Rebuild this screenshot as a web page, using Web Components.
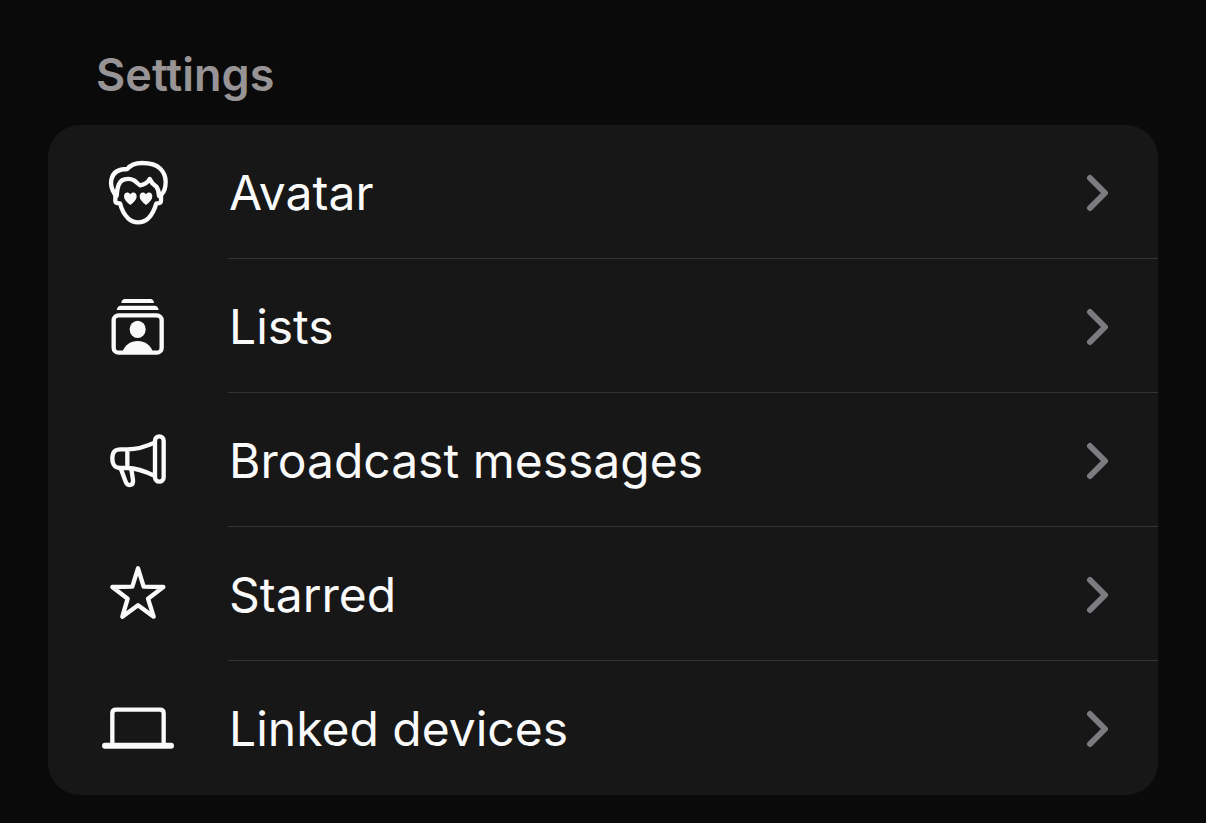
<!DOCTYPE html>
<html lang="en">
<head>
<meta charset="utf-8">
<meta name="viewport" content="width=device-width, initial-scale=1">
<title>Settings</title>
<style>
  html { background: #0a0a0a; }
  body { margin: 0; font-family: Inter, "Liberation Sans", sans-serif; color: #fafafa; }
</style>
</head>
<body>
<settings-section heading="Settings">
  <settings-row icon="avatar">Avatar</settings-row>
  <settings-row icon="lists">Lists</settings-row>
  <settings-row icon="megaphone">Broadcast messages</settings-row>
  <settings-row icon="star">Starred</settings-row>
  <settings-row icon="laptop">Linked devices</settings-row>
</settings-section>
<script>
const ICONS = {
  avatar: `<svg viewBox="36 18 216 216" fill="none" stroke="currentColor" stroke-width="13" stroke-linejoin="round" stroke-linecap="round">
    <path d="M74 132C65 118 61 104 64 89C68 69 85 57 112 57C122 44 138 39 156 39C176 39 198 43 211 56C221 66 227 79 227 95C227 112 223 125 215 133"/>
    <path d="M80 138C81 118 84 94 101 89C113 85 123 86 132 91C138 95 143 101 150 106C162 104 173 98 179 87C184 98 190 104 199 110C205 118 207 128 207 138"/>
    <path d="M76 132V153C76 158 80 160 90 160C94 176 103 194 114 205C123 213 132 217 144 217C156 217 166 213 175 205C187 193 194 177 199 160C209 160 213 157 213 152V132" />
    <g fill="currentColor" stroke="none">
      <path d="M121 165C110 157 102 149 102 139C102 126 115 124 121 133C127 124 140 126 140 139C140 149 132 157 121 165Z"/>
      <path d="M168 165C157 157 149 149 149 139C149 126 162 124 168 133C174 124 187 126 187 139C187 149 179 157 168 165Z"/>
    </g></svg>`,
  lists: `<svg viewBox="36 6 216 216" fill="currentColor">
    <path d="M94 45C95 36 99 33 104 33H182C187 33 191 36 192 45Z"/>
    <path d="M80 66C82 56 86 53 92 53H194C200 53 204 56 206 66Z"/>
    <rect x="71" y="82" width="144" height="112" rx="15" fill="none" stroke="currentColor" stroke-width="13"/>
    <ellipse cx="143" cy="124" rx="24" ry="26"/>
    <path d="M98 190C105 170 122 159 143 159C164 159 181 170 188 190V196H98Z"/></svg>`,
  megaphone: `<svg viewBox="36 6 216 216" fill="none" stroke="currentColor" stroke-width="13" stroke-linejoin="round">
    <rect x="195" y="43" width="26" height="136" rx="13"/>
    <path d="M195 61C170 73 141 82 112 82H92C74 82 67 90 67 109C67 129 74 138 92 138H112C141 138 170 150 195 162M112 82V138"/>
    <path d="M92 139L107 179C110 188 116 190 121 189C128 187 130 181 129 174L124 141"/></svg>`,
  star: `<svg viewBox="36 6 216 216" fill="none" stroke="currentColor" stroke-width="13" stroke-linejoin="round">
    <path d="M144 37L161 92L220 93L174 128L191 182L144 148L97 182L113 128L67 93L127 92Z"/></svg>`,
  laptop: `<svg viewBox="36 6 216 216" fill="none" stroke="currentColor" stroke-linecap="round">
    <path d="M67 166V70Q67 59 78 59H210Q221 59 221 70V166" stroke-width="13"/>
    <path d="M45 167H243" stroke-width="18"/></svg>`
};

class SettingsSection extends HTMLElement {
  connectedCallback() {
    const root = this.attachShadow({ mode: "open" });
    root.innerHTML = `
      <style>
        :host { display: block; padding: 48px 48px 28px; }
        h2 { margin: 0; padding: 0 48px; font-size: 45px; line-height: 53px; font-weight: 600; color: #989496; }
        .card { margin-top: 24px; border-radius: 32px; background: #171717; overflow: hidden; }
      </style>
      <section aria-labelledby="title">
        <h2 id="title"></h2>
        <div class="card"><slot></slot></div>
      </section>`;
    root.querySelector("h2").textContent = this.getAttribute("heading");
  }
}

class SettingsRow extends HTMLElement {
  connectedCallback() {
    const root = this.attachShadow({ mode: "open" });
    root.innerHTML = `
      <style>
        :host { display: block; --divider: #343434; }
        :host(:last-of-type) { --divider: transparent; }
        button { display: flex; align-items: stretch; width: 100%; margin: 0; padding: 0 0 0 54px; border: 0; background: none; color: inherit; font: inherit; text-align: left; cursor: pointer; }
        .icon { display: flex; align-items: center; flex: none; width: 126px; }
        .icon svg { width: 72px; height: 72px; }
        .body { display: flex; align-items: center; flex: 1; min-width: 0; box-sizing: border-box; min-height: 134px; padding: 3px 48px 0 1px; border-bottom: 1px solid var(--divider); }
        .label { flex: 1; font-size: 48px; line-height: 60px; }
        .chevron { flex: none; width: 24px; height: 40px; color: #7c7c80; }
      </style>
      <button type="button">
        <span class="icon" aria-hidden="true">${ICONS[this.getAttribute("icon")]}</span>
        <span class="body">
          <span class="label"><slot></slot></span>
          <svg class="chevron" viewBox="0 0 24 40" fill="none" stroke="currentColor" stroke-width="6" stroke-linecap="round" stroke-linejoin="round" aria-hidden="true"><path d="M4 5L19 20L4 35"/></svg>
        </span>
      </button>`;
  }
}

customElements.define("settings-section", SettingsSection);
customElements.define("settings-row", SettingsRow);
</script>
</body>
</html>
